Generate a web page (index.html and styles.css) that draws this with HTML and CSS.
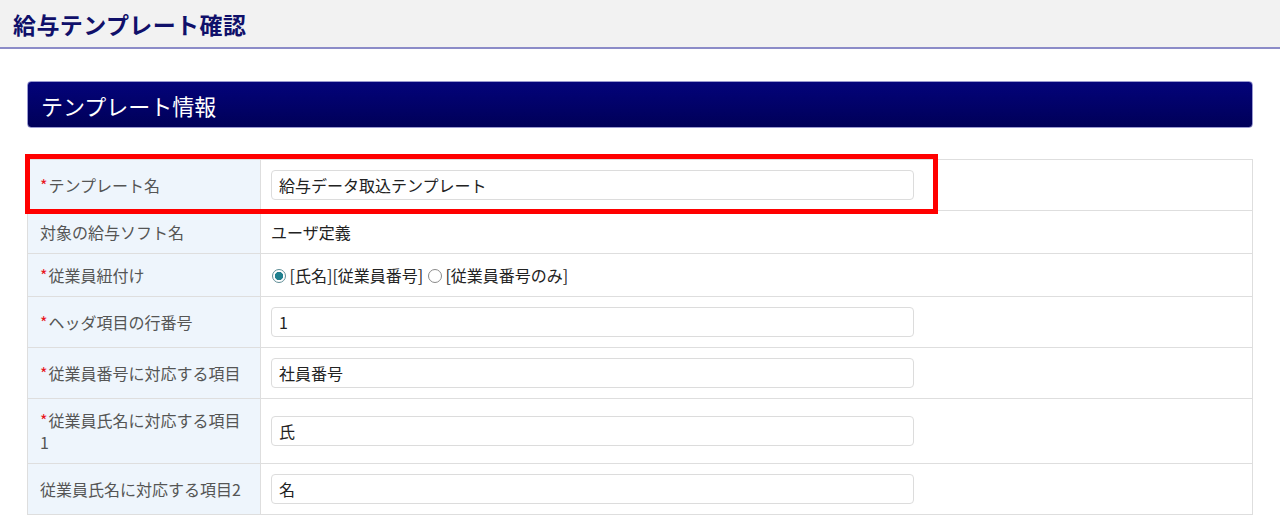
FILE: index.html
```html
<!DOCTYPE html>
<html lang="ja">
<head>
    <meta charset="UTF-8">
    <title>給与テンプレート確認</title>
    <link rel="stylesheet" href="styles.css">
</head>
<body>
    <div class="page-header">
        <h1>給与テンプレート確認</h1>
    </div>

    <div class="content">
        <div class="section-title">テンプレート情報</div>

        <div class="form-wrap">
            <table class="form-table">
                <tr class="row-first">
                    <th><span class="req">*</span>テンプレート名</th>
                    <td><input type="text" class="text-input" value="給与データ取込テンプレート" readonly></td>
                </tr>
                <tr>
                    <th>対象の給与ソフト名</th>
                    <td>ユーザ定義</td>
                </tr>
                <tr>
                    <th><span class="req">*</span>従業員紐付け</th>
                    <td>
                        <span class="radio checked"></span> [氏名][従業員番号]
                        <span class="radio"></span> [従業員番号のみ]
                    </td>
                </tr>
                <tr>
                    <th><span class="req">*</span>ヘッダ項目の行番号</th>
                    <td><input type="text" class="text-input" value="1" readonly></td>
                </tr>
                <tr>
                    <th><span class="req">*</span>従業員番号に対応する項目</th>
                    <td><input type="text" class="text-input" value="社員番号" readonly></td>
                </tr>
                <tr>
                    <th><span class="req">*</span>従業員氏名に対応する項目1</th>
                    <td><input type="text" class="text-input" value="氏" readonly></td>
                </tr>
                <tr>
                    <th>従業員氏名に対応する項目2</th>
                    <td><input type="text" class="text-input" value="名" readonly></td>
                </tr>
            </table>
            <div class="highlight"></div>
        </div>
    </div>
</body>
</html>
```

FILE: styles.css
```css
body {
    margin: 0;
    background-color: #fff;
    font-family: "Noto Sans CJK JP", "Noto Sans", sans-serif;
    color: #333;
}
.page-header {
    height: 47px;
    background-color: #f2f2f2;
    border-bottom: 2px solid #8c8cc8;
    display: flex;
    align-items: center;
    padding-left: 13px;
}
.page-header h1 {
    margin: 0;
    font-size: 23px;
    font-weight: bold;
    color: #10106a;
    letter-spacing: 0.4px;
}
.content {
    padding: 32px 27px 0 27px;
}
.section-title {
    height: 45px;
    display: flex;
    align-items: center;
    padding-left: 13px;
    font-size: 22px;
    color: #fff;
    background: linear-gradient(#03037a, #000058);
    border: 1px solid #9a9ad0;
    border-radius: 4px;
}
.form-wrap {
    position: relative;
    margin-top: 31px;
}
.form-table {
    width: 100%;
    border-collapse: collapse;
    font-size: 16px;
}
.form-table th,
.form-table td {
    border: 1px solid #dedede;
    text-align: left;
    vertical-align: middle;
    line-height: 22px;
    padding-top: 10px;
    padding-bottom: 10px;
}
.form-table th {
    width: 205px;
    padding-left: 12px;
    padding-right: 15px;
    background-color: #eef5fc;
    color: #555;
    font-weight: normal;
}
.form-table td {
    padding-left: 10px;
    padding-right: 10px;
    color: #222;
}
.row-first th,
.row-first td {
    height: 30px;
}
.req {
    color: #e8141b;
    margin-right: 1px;
}
.text-input {
    box-sizing: border-box;
    width: 643px;
    height: 30px;
    padding: 0 7px;
    border: 1px solid #dcdcdc;
    border-radius: 4px;
    font-family: inherit;
    font-size: 16px;
    color: #222;
    display: block;
    outline: none;
}
.radio {
    display: inline-block;
    box-sizing: border-box;
    width: 14px;
    height: 14px;
    border: 1px solid #8a8a8a;
    border-radius: 50%;
    vertical-align: -1px;
    margin-left: 1px;
}
.radio.checked {
    border-color: #5f8d96;
    background: radial-gradient(circle, #1f7f8e 0 3.8px, #fff 4.5px);
}
.highlight {
    position: absolute;
    left: -2px;
    top: -5px;
    width: 903px;
    height: 50px;
    border: 5px solid #ff0000;
    pointer-events: none;
}
```
